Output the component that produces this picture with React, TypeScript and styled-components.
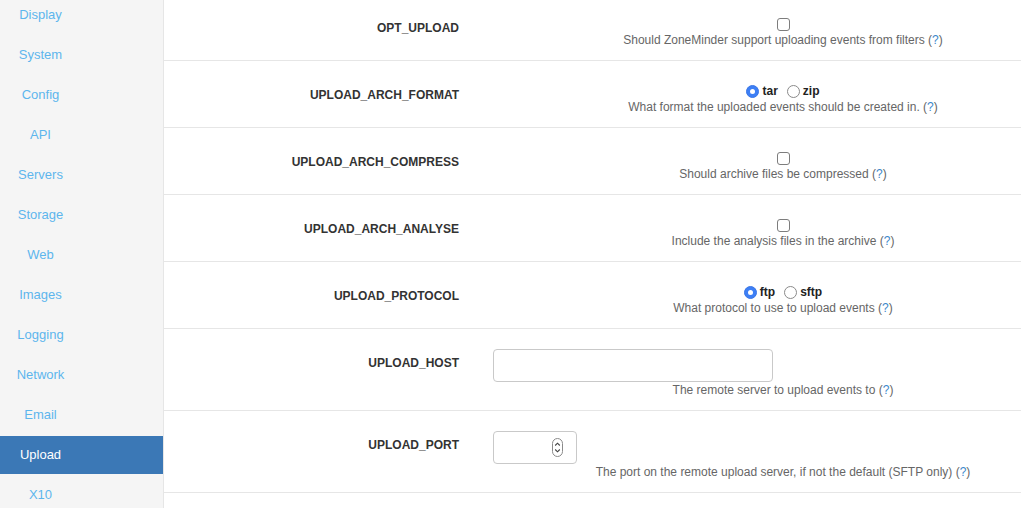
import React from 'react';
import styled, { createGlobalStyle } from 'styled-components';

const GlobalStyle = createGlobalStyle`
  html, body {
    margin: 0;
    padding: 0;
    overflow: hidden;
    background: #fff;
    font-family: "Liberation Sans", Arial, Helvetica, sans-serif;
  }
`;

const Page = styled.div`
  display: flex;
  min-height: 100vh;
`;

const Sidebar = styled.nav`
  width: 163px;
  flex-shrink: 0;
  background: #f5f5f5;
  border-right: 1px solid #e6e6e6;
  min-height: 100vh;
`;

const NavList = styled.ul`
  list-style: none;
  margin: -4px 0 0;
  padding: 0;
  display: flex;
  flex-direction: column;
  gap: 2px;
`;

const NavItem = styled.li<{ $active?: boolean }>`
  height: 38px;
  background: ${({ $active }) => ($active ? '#3b78b6' : 'transparent')};
`;

const NavLink = styled.a<{ $active?: boolean }>`
  display: block;
  width: 81px;
  line-height: 38px;
  text-align: center;
  font-size: 13px;
  color: ${({ $active }) => ($active ? '#fff' : '#5db6ed')};
  text-decoration: none;
`;

const Main = styled.main`
  flex: 1;
  overflow: hidden;
  margin-top: -6px;
`;

const Row = styled.div`
  display: grid;
  grid-template-columns: 295px 580px;
  column-gap: 34px;
  border-bottom: 1px solid #e6e6e6;
`;

const Label = styled.div`
  padding-top: 27px;
  text-align: right;
  font-size: 12px;
  line-height: 14px;
  font-weight: bold;
  color: #333;
`;

const Value = styled.div`
  display: flex;
  flex-direction: column;
  align-items: center;
  padding: 20px 0 12px;
`;

const Control = styled.div<{ $left?: boolean }>`
  min-height: 18px;
  display: flex;
  align-items: center;
  gap: 9px;
  align-self: ${({ $left }) => ($left ? 'flex-start' : 'center')};
`;

const Checkbox = styled.span`
  display: inline-block;
  width: 11px;
  height: 11px;
  border: 1px solid #7d7d7d;
  border-radius: 3px;
  background: #fff;
  margin-top: 2px;
`;

const RadioOption = styled.label`
  display: inline-flex;
  align-items: center;
  gap: 3px;
  font-size: 12px;
  font-weight: bold;
  color: #222;
  margin-top: 2px;
`;

const RadioDot = styled.span<{ $checked?: boolean }>`
  display: inline-flex;
  align-items: center;
  justify-content: center;
  box-sizing: border-box;
  width: 13px;
  height: 13px;
  border-radius: 50%;
  background: ${({ $checked }) => ($checked ? '#3d7ff5' : '#fff')};
  border: 1px solid ${({ $checked }) => ($checked ? '#3a76e6' : '#8a8a8a')};

  &::after {
    content: '';
    display: ${({ $checked }) => ($checked ? 'block' : 'none')};
    width: 5px;
    height: 5px;
    border-radius: 50%;
    background: #fff;
  }
`;

const Description = styled.div`
  font-size: 12px;
  line-height: 16px;
  color: #666;
  text-align: center;
`;

const Help = styled.a`
  color: #3c88cc;
  text-decoration: none;
`;

const InputWrap = styled.div`
  position: relative;
  display: inline-block;
`;

const TextInput = styled.input<{ $width: number }>`
  box-sizing: border-box;
  width: ${({ $width }) => $width}px;
  height: 33px;
  border: 1px solid #c9c9c9;
  border-radius: 4px;
  background: #fff;
  padding: 0 8px;
  font-family: inherit;
  font-size: 12px;
  outline: none;
  appearance: textfield;

  &::-webkit-inner-spin-button,
  &::-webkit-outer-spin-button {
    -webkit-appearance: none;
    margin: 0;
  }
`;

const Spinner = styled.span`
  position: absolute;
  right: 14px;
  top: 7px;
  width: 11px;
  height: 19px;
  pointer-events: none;
`;

const SpinIcon = () => (
  <svg width="11" height="19" viewBox="0 0 11 19">
    <rect x="0.5" y="0.5" width="10" height="18" rx="5" fill="#fff" stroke="#8a8a8a" />
    <path d="M3.2 7.5 L5.5 5.2 L7.8 7.5" fill="none" stroke="#444" strokeWidth="1.1" />
    <path d="M3.2 11.5 L5.5 13.8 L7.8 11.5" fill="none" stroke="#444" strokeWidth="1.1" />
  </svg>
);

const navItems = [
  'Display', 'System', 'Config', 'API', 'Servers', 'Storage', 'Web',
  'Images', 'Logging', 'Network', 'Email', 'Upload', 'X10',
];

type Option =
  | { name: string; kind: 'checkbox'; desc: string }
  | { name: string; kind: 'radio'; options: string[]; desc: string }
  | { name: string; kind: 'text' | 'number'; width: number; desc: string };

const options: Option[] = [
  { name: 'OPT_UPLOAD', kind: 'checkbox', desc: 'Should ZoneMinder support uploading events from filters' },
  { name: 'UPLOAD_ARCH_FORMAT', kind: 'radio', options: ['tar', 'zip'], desc: 'What format the uploaded events should be created in.' },
  { name: 'UPLOAD_ARCH_COMPRESS', kind: 'checkbox', desc: 'Should archive files be compressed' },
  { name: 'UPLOAD_ARCH_ANALYSE', kind: 'checkbox', desc: 'Include the analysis files in the archive' },
  { name: 'UPLOAD_PROTOCOL', kind: 'radio', options: ['ftp', 'sftp'], desc: 'What protocol to use to upload events' },
  { name: 'UPLOAD_HOST', kind: 'text', width: 280, desc: 'The remote server to upload events to' },
  { name: 'UPLOAD_PORT', kind: 'number', width: 84, desc: 'The port on the remote upload server, if not the default (SFTP only)' },
];

const renderControl = (opt: Option) => {
  if (opt.kind === 'checkbox') {
    return (
      <Control>
        <Checkbox />
      </Control>
    );
  }
  if (opt.kind === 'radio') {
    return (
      <Control>
        {opt.options.map((o, i) => (
          <RadioOption key={o}>
            <RadioDot $checked={i === 0} />
            {o}
          </RadioOption>
        ))}
      </Control>
    );
  }
  return (
    <Control $left>
      <InputWrap>
        <TextInput type={opt.kind} $width={opt.width} />
        {opt.kind === 'number' && (
          <Spinner>
            <SpinIcon />
          </Spinner>
        )}
      </InputWrap>
    </Control>
  );
};

const App: React.FC = () => {
  return (
    <>
      <GlobalStyle />
      <Page>
        <Sidebar>
          <NavList>
            {navItems.map((item) => (
              <NavItem key={item} $active={item === 'Upload'}>
                <NavLink href="#" $active={item === 'Upload'}>
                  {item}
                </NavLink>
              </NavItem>
            ))}
          </NavList>
        </Sidebar>
        <Main>
          {options.map((opt) => (
            <Row key={opt.name}>
              <Label>{opt.name}</Label>
              <Value>
                {renderControl(opt)}
                <Description>
                  {opt.desc} (<Help href="#">?</Help>)
                </Description>
              </Value>
            </Row>
          ))}
        </Main>
      </Page>
    </>
  );
};

export default App;
